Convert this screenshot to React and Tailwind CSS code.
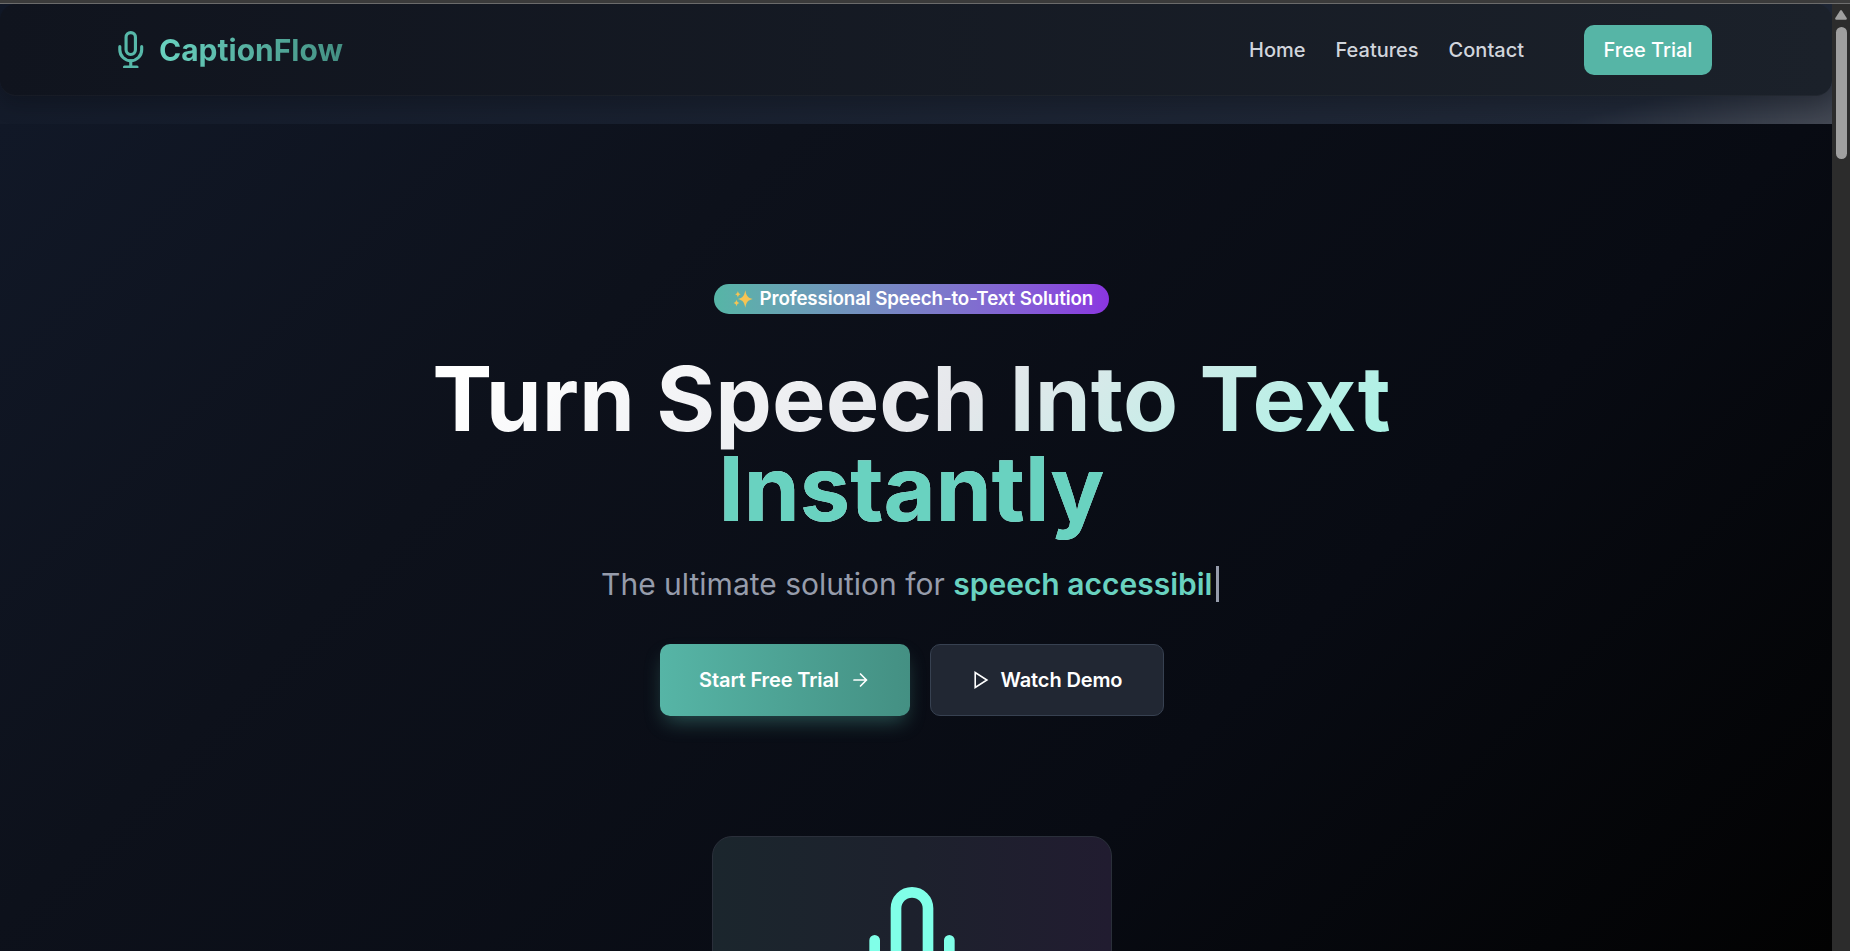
import React from "react";

function MicIcon({ className }) {
  return (
    <svg viewBox="0 0 24 24" fill="none" stroke="currentColor" strokeWidth="2" strokeLinecap="round" strokeLinejoin="round" className={className}>
      <path d="M12 1a3 3 0 0 0-3 3v8a3 3 0 0 0 6 0V4a3 3 0 0 0-3-3z" />
      <path d="M19 10v2a7 7 0 0 1-14 0v-2" />
      <path d="M12 19v4" />
      <path d="M8 23h8" />
    </svg>
  );
}

function Sparkles() {
  return (
    <svg viewBox="0 0 20 20" fill="#f6c453" className="mr-[7px] h-5 w-5 shrink-0">
      <path d="M12.3 1.2C13.500 7 14.600 8.600 19.800 10c-5.200 1.400-6.300 3-7.500 8.800C11.100 13 10 11.400 4.800 10c5.200-1.400 6.300-3 7.500-8.800z" />
      <path d="M4.900 2c.5 2.100 1 2.700 2.800 3.200-1.800.5-2.300 1.100-2.800 3.200-.5-2.100-1-2.700-2.800-3.200 1.800-.5 2.300-1.100 2.800-3.200z" />
      <path d="M3.500 10.600c.5 2.200 1.100 2.900 3 3.400-1.900.5-2.500 1.200-3 3.400-.5-2.200-1.100-2.900-3-3.400 1.900-.5 2.500-1.200 3-3.400z" />
    </svg>
  );
}

function Navbar() {
  return (
    <header className="h-[120px] shrink-0 bg-[linear-gradient(165deg,#111827,#1f2736_88%,#434853)]">
      <nav className="flex h-[92px] items-center justify-between rounded-2xl border-b border-white/3 bg-linear-to-r from-[#10141e] to-[#1b212a] pr-[120px] pl-[112px] shadow-[0_10px_20px_rgba(0,0,0,0.18)]">
        <div className="flex items-center gap-[9.5px]">
          <MicIcon className="h-[37.5px] w-[37.5px] text-[#57b8a9]" />
          <span className="bg-linear-to-r from-[#69d2c0] to-[#449083] bg-clip-text text-[30px] leading-9 font-bold text-transparent">CaptionFlow</span>
        </div>
        <div className="flex items-center text-[20px] font-medium text-gray-300">
          <div className="mr-[60px] flex gap-[30px]">
            <a>Home</a>
            <a>Features</a>
            <a>Contact</a>
          </div>
          <button className="h-[50px] w-32 rounded-[10px] bg-[#56b5a6] font-medium text-white">Free Trial</button>
        </div>
      </nav>
    </header>
  );
}

function Hero() {
  return (
    <main className="flex h-[827px] flex-col items-center overflow-hidden bg-[linear-gradient(135deg,#111827,#0d111b_30%,#080b13_68%,#020202)] pt-40 pr-[9px] font-semibold">
      <div className="flex h-[30px] w-[395px] shrink-0 items-center rounded-full bg-linear-to-r from-[#56b5a6] to-[#8a35e0] pl-[18.5px] text-[18.75px] tracking-[-0.12px] whitespace-nowrap text-white">
        <Sparkles />
        <span>Professional Speech-to-Text Solution</span>
      </div>
      <h1 className="mt-10 w-[1120px] shrink-0 bg-[linear-gradient(135deg,#fff_10%,#e5e7eb_50%,#92f6e2)] bg-clip-text pb-3 text-center text-[90px] leading-[90px] font-bold text-transparent">
        Turn Speech Into Text
        <span className="block text-[#69d2c0]">Instantly</span>
      </h1>
      <p className="mt-5 flex h-[36px] shrink-0 items-center pr-[3px] text-[30px] font-normal whitespace-pre text-[#969cab]">
        The ultimate solution for <span className="font-semibold text-[#69d2c0]">speech accessibil</span>
        <span className="ml-1 h-9 w-[2.5px] bg-[#969cab]" />
      </p>
      <div className="mt-[42px] flex shrink-0 gap-5 text-[20px] tracking-[-0.12px] text-white">
        <button className="flex h-[72px] w-[250px] items-center justify-center gap-[11px] rounded-[10px] bg-linear-to-r from-[#56b5a6] to-[#449083] shadow-[0_10px_20px_-5px_rgba(86,181,166,0.4)]">
          Start Free Trial
          <svg viewBox="0 0 20 20" fill="none" stroke="currentColor" strokeWidth="1.700" strokeLinecap="round" strokeLinejoin="round" className="h-5 w-5">
            <path d="M4 10h12.500M10.500 4l6 6-6 6" />
          </svg>
        </button>
        <button className="flex h-[72px] w-[234px] items-center justify-center gap-[10px] rounded-[10px] border border-[#374151] bg-[#212733]">
          <svg viewBox="0 0 20 20" fill="none" stroke="currentColor" strokeWidth="1.600" strokeLinejoin="miter" className="h-5 w-5">
            <path d="M4.200 2.500v15l11.700-7.500z" />
          </svg>
          Watch Demo
        </button>
      </div>
      <div className="mt-[120px] flex h-[400px] w-[400px] shrink-0 justify-center rounded-[20px] border border-[#2a2f3a] bg-[linear-gradient(to_right,#1b262d,#1d212d_50%,#211c30)] pt-[50px]">
        <MicIcon className="h-32 w-32 text-[#80ffe8]" />
      </div>
    </main>
  );
}

function Scrollbar() {
  return (
    <div className="flex w-[18px] shrink-0 flex-col items-center bg-[#2c2c2c] pt-[6px]">
      <svg viewBox="0 0 12 10" className="h-[10px] w-3" fill="#9f9f9f">
        <path d="M5 .700Q6-.500 7 .700L11.700 8Q12.300 9.700 10.700 9.700H1.300Q-.300 9.700.300 8z" />
      </svg>
      <div className="mt-[7px] h-[132px] w-[11px] rounded-full bg-[#9f9f9f]" />
    </div>
  );
}

export default function App() {
  return (
    <div className="flex h-[951px] w-[1850px] flex-col overflow-hidden bg-black font-['Inter',sans-serif]">
      <div className="h-1 shrink-0 border-b border-[#6e6e6e] bg-[#3c3c3c]" />
      <div className="flex min-h-0 flex-1">
        <div className="flex w-[1832px] flex-col">
          <Navbar />
          <Hero />
        </div>
        <Scrollbar />
      </div>
    </div>
  );
}
